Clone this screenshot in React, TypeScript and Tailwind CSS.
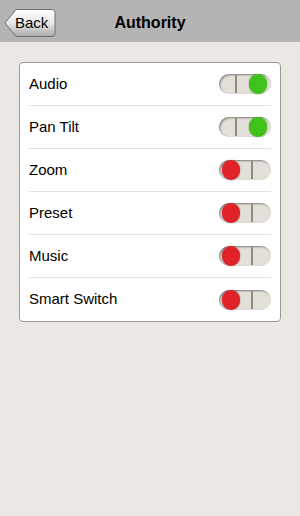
import React from 'react';

const items = [
  { label: 'Audio', on: true },
  { label: 'Pan Tilt', on: true },
  { label: 'Zoom', on: false },
  { label: 'Preset', on: false },
  { label: 'Music', on: false },
  { label: 'Smart Switch', on: false },
];

function Toggle({ on }: { on: boolean }) {
  return (
    <div className="relative h-[20px] w-[52px] rounded-full bg-[#e3e0d9] shadow-[inset_1px_1px_2px_rgba(0,0,0,0.45)]">
      {/* divider line */}
      <div
        className={`absolute top-[1px] bottom-[1px] w-[2px] bg-[#8f8c88] ${on ? 'left-[16px]' : 'left-[32px]'}`}
      />
      <div
        className={`absolute top-[0px] h-[20px] w-[18px] rounded-full shadow-[0_0_2px_rgba(0,0,0,0.35)] ${
          on ? 'right-[4px] bg-[#3fc21a]' : 'left-[3px] bg-[#e02328]'
        }`}
      />
    </div>
  );
}

function BackButton() {
  return (
    <div className="relative h-[30px] w-[52px]">
      <svg width="52" height="30" viewBox="0 0 52 30" className="absolute inset-0">
        <defs>
          <linearGradient id="bk" x1="0" y1="0" x2="0" y2="1">
            <stop offset="0" stopColor="#ffffff" />
            <stop offset="0.5" stopColor="#e8e8e8" />
            <stop offset="1" stopColor="#a9a9a9" />
          </linearGradient>
        </defs>
        <path
          d="M1 15 L12 1.5 L48 1.5 Q51 1.5 51 4.5 L51 25.5 Q51 28.5 48 28.5 L12 28.5 Z"
          fill="url(#bk)"
          stroke="#6e6e6e"
          strokeWidth="1"
        />
      </svg>
      <span className="absolute left-[11px] top-[6px] text-[15px] leading-[18px] text-black [font-family:'Liberation_Sans',Arial,sans-serif]">
        Back
      </span>
    </div>
  );
}

export default function App() {
  return (
    <div className="flex h-[516px] w-[300px] flex-col bg-[#ebe8e3] [font-family:'Liberation_Sans',Arial,sans-serif]">
      <div className="relative flex h-[42px] items-center justify-center bg-[#b4b4b4] pt-[3px]">
        <div className="absolute left-[4px] top-[8px]">
          <BackButton />
        </div>
        <span className="text-[16px] font-bold text-black">Authority</span>
      </div>
      <div className="px-[19px] pt-[20px]">
        <div className="rounded-[4px] border border-[#9a9a9a] bg-white px-[9px]">
          {items.map((it, i) => (
            <div
              key={it.label}
              className={`flex h-[43px] items-center justify-between ${
                i < items.length - 1 ? 'border-b border-[#e4e2de]' : ''
              }`}
            >
              <span className="text-[15px] text-black">{it.label}</span>
              <Toggle on={it.on} />
            </div>
          ))}
        </div>
      </div>
    </div>
  );
}
